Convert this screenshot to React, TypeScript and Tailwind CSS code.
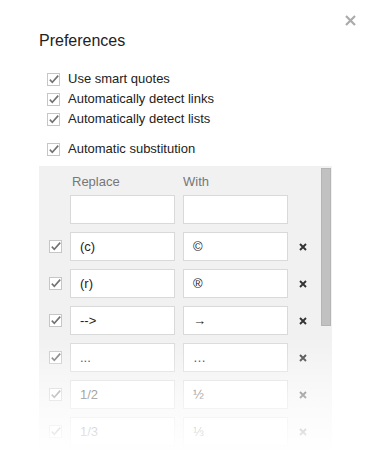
import React from "react";

type Substitution = {
  from: string;
  to: string;
};

const substitutions: Substitution[] = [
  { from: "(c)", to: "©" },
  { from: "(r)", to: "®" },
  { from: "-->", to: "→" },
  { from: "...", to: "…" },
  { from: "1/2", to: "½" },
  { from: "1/3", to: "⅓" },
];

const options = [
  "Use smart quotes",
  "Automatically detect links",
  "Automatically detect lists",
];

function CheckBox() {
  return (
    <svg width="13" height="13" viewBox="0 0 13 13" className="shrink-0">
      <rect x="0.5" y="0.5" width="12" height="12" fill="#fff" stroke="#c6c6c6" />
      <path
        d="M2.8 6.6 L5.3 9.2 L11.2 2.6"
        fill="none"
        stroke="#727272"
        strokeWidth="1.6"
      />
    </svg>
  );
}

function RemoveIcon() {
  return (
    <svg width="8" height="8" viewBox="0 0 8 8" className="shrink-0">
      <path d="M1 1 L7 7 M7 1 L1 7" stroke="#333" strokeWidth="1.9" />
    </svg>
  );
}

function TextBox({ value }: { value?: string }) {
  return (
    <div className="flex h-[29px] w-[105px] items-center border border-[#d9d9d9] bg-white px-[9px] text-[13px] text-[#222]">
      {value}
    </div>
  );
}

export default function App() {
  return (
    <div className="relative h-[454px] w-[372px] overflow-hidden bg-white font-['Liberation_Sans',Arial,sans-serif]">
      <button
        type="button"
        aria-label="Close"
        className="absolute right-[16px] top-[15px]"
      >
        <svg width="11" height="11" viewBox="0 0 11 11">
          <path d="M1 1 L10 10 M10 1 L1 10" stroke="#ababab" strokeWidth="2.2" />
        </svg>
      </button>

      <div className="pl-[39px] pt-[31px]">
        <h1 className="text-[16px] leading-[19px] text-[#222]">Preferences</h1>

        <div className="mt-[19px] pl-[8px]">
          {options.map((label) => (
            <div
              key={label}
              className="flex h-[20px] items-center gap-[8px] text-[13px] text-[#222]"
            >
              <CheckBox />
              <span>{label}</span>
            </div>
          ))}
          <div className="mt-[10px] flex h-[20px] items-center gap-[8px] text-[13px] text-[#222]">
            <CheckBox />
            <span>Automatic substitution</span>
          </div>
        </div>

        <div className="relative mt-[7px] h-[288px] w-[293px] bg-[#f1f1f1] pt-[8px]">
          <div className="flex h-[16px] pl-[33px] text-[13px] leading-[16px] text-[#777]">
            <span className="w-[111px]">Replace</span>
            <span>With</span>
          </div>

          <div className="mt-[5px] flex flex-col gap-[8px]">
            <div className="flex items-center pl-[31px]">
              <TextBox />
              <div className="ml-[8px]">
                <TextBox />
              </div>
            </div>
            {substitutions.map((item) => (
              <div key={item.from} className="flex items-center pl-[10px]">
                <CheckBox />
                <div className="ml-[8px]">
                  <TextBox value={item.from} />
                </div>
                <div className="ml-[8px]">
                  <TextBox value={item.to} />
                </div>
                <div className="ml-[11px]">
                  <RemoveIcon />
                </div>
              </div>
            ))}
          </div>

          <div className="absolute right-[1px] top-[2px] h-[158px] w-[10px] border border-[#b4b4b4] bg-[#c1c1c1]" />
          <div className="pointer-events-none absolute inset-x-0 bottom-0 h-[118px] bg-gradient-to-b from-white/0 via-white/60 to-white" />
        </div>
      </div>
    </div>
  );
}
